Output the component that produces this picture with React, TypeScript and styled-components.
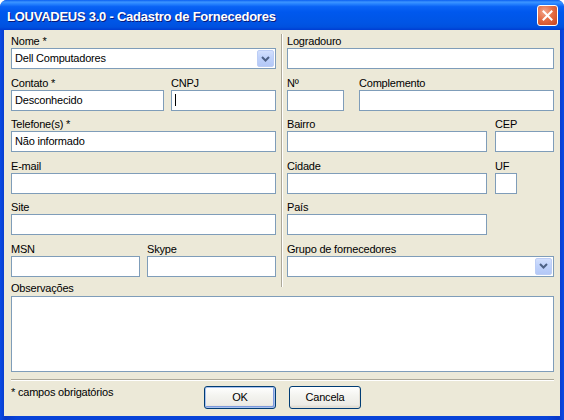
import React from "react";
import styled, { createGlobalStyle } from "styled-components";

const UI_FONT = `"Liberation Sans", Arial, sans-serif`;

const Global = createGlobalStyle`
  html, body { margin: 0; padding: 0; background: #ffffff; }
  #root { width: 564px; height: 420px; }
  * { box-sizing: border-box; }
`;

const Window = styled.div`
  width: 564px;
  height: 420px;
  display: flex;
  flex-direction: column;
  border-radius: 7px 7px 0 0;
  overflow: hidden;
  background: #0843d8;
  font-family: ${UI_FONT};
`;

const TitleBar = styled.div`
  height: 30px;
  flex: none;
  display: flex;
  justify-content: space-between;
  align-items: flex-start;
  padding: 0 6px 0 7px;
  background: linear-gradient(
    to bottom,
    #0a5ff1 0%,
    #3d95ff 7%,
    #2a86ff 12%,
    #0a63f5 22%,
    #0058ee 40%,
    #0055e5 75%,
    #0051df 90%,
    #003dd2 100%
  );
`;

const Title = styled.span`
  padding-top: 9px;
  font-weight: bold;
  font-size: 13px;
  line-height: 16px;
  color: #ffffff;
  letter-spacing: -0.25px;
  text-shadow: 1px 1px 0 #0a1a7a;
  white-space: nowrap;
`;

const CloseButton = styled.div`
  margin-top: 5px;
  width: 21px;
  height: 21px;
  border: 1px solid #ffffff;
  border-radius: 3px;
  background: radial-gradient(circle at 35% 30%, #f3a68c 0%, #e46d45 45%, #c7431d 100%);
  display: flex;
  align-items: center;
  justify-content: center;
`;

const Frame = styled.div`
  flex: 1;
  display: flex;
  padding: 0 4px 4px;
  background: linear-gradient(to right, #0a4be4 0%, #0839c8 1%, #0843d8 3%, #0843d8 97%, #0839c8 99%, #0a4be4 100%);
`;

const Body = styled.div`
  flex: 1;
  background: #ece9d8;
  display: flex;
  flex-direction: column;
  padding: 4px 6px 0 7px;
  font-size: 11px;
  color: #000000;
`;

const Columns = styled.div`
  display: flex;
  align-items: stretch;
`;

const Column = styled.div<{ $w: number }>`
  width: ${(p) => p.$w}px;
  display: flex;
  flex-direction: column;
  gap: 6.6px;
`;

const Divider = styled.div`
  width: 2px;
  margin: 0 4px -10px 5px;
  border-left: 1px solid #aca899;
  border-right: 1px solid #ffffff;
`;

const Row = styled.div<{ $gap?: number }>`
  display: flex;
  gap: ${(p) => p.$gap ?? 7}px;
`;

const Field = styled.div<{ $w?: number }>`
  display: flex;
  flex-direction: column;
  width: ${(p) => (p.$w ? `${p.$w}px` : "100%")};
`;

const Label = styled.div`
  height: 14px;
  font-size: 11px;
  line-height: 14px;
  letter-spacing: -0.2px;
  white-space: nowrap;
`;

const TextBox = styled.div`
  height: 21px;
  border: 1px solid #7f9db9;
  background: #ffffff;
  padding: 0 3px;
  font-size: 11px;
  line-height: 19px;
  letter-spacing: -0.2px;
  white-space: nowrap;
  display: flex;
  align-items: center;
`;

const Caret = styled.span`
  width: 1px;
  height: 12px;
  background: #000000;
`;

const ComboBox = styled.div`
  height: 21px;
  border: 1px solid #7f9db9;
  background: #ffffff;
  display: flex;
  align-items: center;
  padding: 0 1px 0 3px;
`;

const ComboText = styled.span`
  flex: 1;
  font-size: 11px;
  line-height: 19px;
  letter-spacing: -0.2px;
  white-space: nowrap;
`;

const ComboButton = styled.div`
  width: 17px;
  height: 17px;
  flex: none;
  border: 1px solid #bccdf5;
  border-radius: 2px;
  background: linear-gradient(to bottom, #d3e0fd 0%, #c1d3fb 40%, #b3c8f7 100%);
  display: flex;
  align-items: center;
  justify-content: center;
`;

const TextArea = styled.div`
  height: 76px;
  margin-top: 1px;
  border: 1px solid #7f9db9;
  background: #ffffff;
`;

const Notes = styled.div`
  margin-top: 4px;
  display: flex;
  flex-direction: column;
`;

const Separator = styled.div`
  margin-top: 7px;
  height: 2px;
  border-top: 1px solid #aca899;
  border-bottom: 1px solid #ffffff;
`;

const Footer = styled.div`
  margin-top: 5px;
  display: grid;
  grid-template-columns: 1fr auto 1fr;
  align-items: start;
`;

const Note = styled.div`
  margin-top: -1px;
  font-size: 11px;
  line-height: 14px;
  letter-spacing: -0.2px;
  white-space: nowrap;
`;

const Buttons = styled.div`
  display: flex;
  gap: 13px;
`;

const Button = styled.div<{ $default?: boolean }>`
  width: 72px;
  height: 23px;
  border: 1px solid #003c74;
  border-radius: 3px;
  background: linear-gradient(to bottom, #ffffff 0%, #f4f4f0 40%, #ecebe6 85%, #d8d2c6 100%);
  box-shadow: ${(p) =>
    p.$default ? "inset 0 0 0 1px #a9c2ee, inset -1px -1px 0 1px #7c99dc" : "inset -1px -1px 0 #e3ded4"};
  display: flex;
  align-items: center;
  justify-content: center;
  font-size: 11px;
  letter-spacing: -0.2px;
`;

const Chevron = () => (
  <svg width="9" height="6" viewBox="0 0 9 6">
    <path d="M1 1 L4.5 4.5 L8 1" fill="none" stroke="#4d6185" strokeWidth="2" />
  </svg>
);

const CloseX = () => (
  <svg width="11" height="11" viewBox="0 0 11 11">
    <path d="M1.5 1.5 L9.5 9.5 M9.5 1.5 L1.5 9.5" stroke="#ffffff" strokeWidth="2" strokeLinecap="square" />
  </svg>
);

const Combo = ({ value }: { value?: string }) => (
  <ComboBox>
    <ComboText>{value}</ComboText>
    <ComboButton>
      <Chevron />
    </ComboButton>
  </ComboBox>
);

export default function App() {
  return (
    <>
      <Global />
      <Window>
        <TitleBar>
          <Title>LOUVADEUS 3.0 - Cadastro de Fornecedores</Title>
          <CloseButton>
            <CloseX />
          </CloseButton>
        </TitleBar>
        <Frame>
          <Body>
            <Columns>
              <Column $w={265}>
                <Field>
                  <Label>Nome *</Label>
                  <Combo value="Dell Computadores" />
                </Field>
                <Row $gap={7}>
                  <Field $w={153}>
                    <Label>Contato *</Label>
                    <TextBox>Desconhecido</TextBox>
                  </Field>
                  <Field $w={105}>
                    <Label>CNPJ</Label>
                    <TextBox>
                      <Caret />
                    </TextBox>
                  </Field>
                </Row>
                <Field>
                  <Label>Telefone(s) *</Label>
                  <TextBox>Não informado</TextBox>
                </Field>
                <Field>
                  <Label>E-mail</Label>
                  <TextBox />
                </Field>
                <Field>
                  <Label>Site</Label>
                  <TextBox />
                </Field>
                <Row $gap={7}>
                  <Field $w={129}>
                    <Label>MSN</Label>
                    <TextBox />
                  </Field>
                  <Field $w={129}>
                    <Label>Skype</Label>
                    <TextBox />
                  </Field>
                </Row>
              </Column>
              <Divider />
              <Column $w={267}>
                <Field>
                  <Label>Logradouro</Label>
                  <TextBox />
                </Field>
                <Row $gap={15}>
                  <Field $w={57}>
                    <Label>Nº</Label>
                    <TextBox />
                  </Field>
                  <Field $w={195}>
                    <Label>Complemento</Label>
                    <TextBox />
                  </Field>
                </Row>
                <Row $gap={8}>
                  <Field $w={200}>
                    <Label>Bairro</Label>
                    <TextBox />
                  </Field>
                  <Field $w={59}>
                    <Label>CEP</Label>
                    <TextBox />
                  </Field>
                </Row>
                <Row $gap={8}>
                  <Field $w={200}>
                    <Label>Cidade</Label>
                    <TextBox />
                  </Field>
                  <Field $w={22}>
                    <Label>UF</Label>
                    <TextBox />
                  </Field>
                </Row>
                <Field $w={200}>
                  <Label>País</Label>
                  <TextBox />
                </Field>
                <Field>
                  <Label>Grupo de fornecedores</Label>
                  <Combo />
                </Field>
              </Column>
            </Columns>
            <Notes>
              <Label>Observações</Label>
              <TextArea />
            </Notes>
            <Separator />
            <Footer>
              <Note>* campos obrigatórios</Note>
              <Buttons>
                <Button $default>OK</Button>
                <Button>Cancela</Button>
              </Buttons>
            </Footer>
          </Body>
        </Frame>
      </Window>
    </>
  );
}
